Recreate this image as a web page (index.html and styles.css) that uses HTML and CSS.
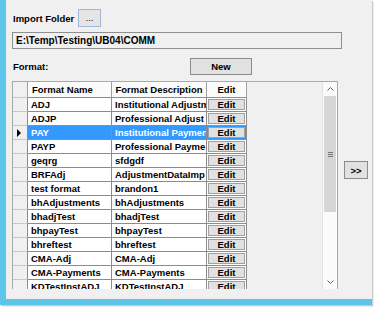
FILE: index.html
```html
<!DOCTYPE html>
<html lang="en">
<head>
    <meta charset="UTF-8">
    <meta name="viewport" content="width=device-width, initial-scale=1.0">
    <title>Import Formats</title>
    <link rel="stylesheet" href="styles.css">
</head>
<body>
    <div class="window">
        <div class="frame">
            <!-- Folder picker -->
            <div class="folder-row">
                <span class="folder-label">Import Folder</span>
                <button class="btn btn-browse">...</button>
            </div>
            <div class="path-box">E:\Temp\Testing\UB04\COMM</div>

            <div class="format-row">
                <span class="format-label">Format:</span>
                <button class="btn btn-new">New</button>
            </div>

            <!-- Formats grid -->
            <div class="grid-row">
                <div class="grid">
                    <div class="grid-body">
                        <div class="row head">
                            <div class="cell rh"></div>
                            <div class="cell h-name">Format Name</div>
                            <div class="cell h-center">Format Description</div>
                            <div class="cell h-center">Edit</div>
                        </div>
                        <div class="row"><div class="cell rh"></div><div class="cell">ADJ</div><div class="cell">Institutional Adjustm</div><div class="cell edit"><button>Edit</button></div></div>
                        <div class="row"><div class="cell rh"></div><div class="cell">ADJP</div><div class="cell">Professional Adjust</div><div class="cell edit"><button>Edit</button></div></div>
                        <div class="row selected"><div class="cell rh"><span class="arrow"></span></div><div class="cell">PAY</div><div class="cell">Institutional Paymen</div><div class="cell edit"><button>Edit</button></div></div>
                        <div class="row"><div class="cell rh"></div><div class="cell">PAYP</div><div class="cell">Professional Payme</div><div class="cell edit"><button>Edit</button></div></div>
                        <div class="row"><div class="cell rh"></div><div class="cell">geqrg</div><div class="cell">sfdgdf</div><div class="cell edit"><button>Edit</button></div></div>
                        <div class="row"><div class="cell rh"></div><div class="cell">BRFAdj</div><div class="cell">AdjustmentDataImp</div><div class="cell edit"><button>Edit</button></div></div>
                        <div class="row"><div class="cell rh"></div><div class="cell">test format</div><div class="cell">brandon1</div><div class="cell edit"><button>Edit</button></div></div>
                        <div class="row"><div class="cell rh"></div><div class="cell">bhAdjustments</div><div class="cell">bhAdjustments</div><div class="cell edit"><button>Edit</button></div></div>
                        <div class="row"><div class="cell rh"></div><div class="cell">bhadjTest</div><div class="cell">bhadjTest</div><div class="cell edit"><button>Edit</button></div></div>
                        <div class="row"><div class="cell rh"></div><div class="cell">bhpayTest</div><div class="cell">bhpayTest</div><div class="cell edit"><button>Edit</button></div></div>
                        <div class="row"><div class="cell rh"></div><div class="cell">bhreftest</div><div class="cell">bhreftest</div><div class="cell edit"><button>Edit</button></div></div>
                        <div class="row"><div class="cell rh"></div><div class="cell">CMA-Adj</div><div class="cell">CMA-Adj</div><div class="cell edit"><button>Edit</button></div></div>
                        <div class="row"><div class="cell rh"></div><div class="cell">CMA-Payments</div><div class="cell">CMA-Payments</div><div class="cell edit"><button>Edit</button></div></div>
                        <div class="row"><div class="cell rh"></div><div class="cell">KDTestInstADJ</div><div class="cell">KDTestInstADJ</div><div class="cell edit"><button>Edit</button></div></div>
                    </div>
                    <div class="vscroll">
                        <div class="sb-btn">
                            <svg width="7" height="4" viewBox="0 0 7 4"><polyline points="0.5,3.5 3.5,0.5 6.5,3.5" fill="none" stroke="#606060" stroke-width="1"/></svg>
                        </div>
                        <div class="sb-thumb">
                            <span class="grip"></span>
                        </div>
                        <div class="sb-track"></div>
                        <div class="sb-btn">
                            <svg width="7" height="4" viewBox="0 0 7 4"><polyline points="0.5,0.5 3.5,3.5 6.5,0.5" fill="none" stroke="#606060" stroke-width="1"/></svg>
                        </div>
                    </div>
                </div>
                <button class="btn btn-move">&gt;&gt;</button>
            </div>
        </div>
    </div>
</body>
</html>
```

FILE: styles.css
```css
body {
    margin: 0;
    padding: 0;
    font-family: "Liberation Sans", Arial, sans-serif;
    font-size: 9.5px;
    font-weight: bold;
    color: #000;
    background: #fff;
}

.window {
    width: 380px;
    height: 312px;
    overflow: hidden;
    background: #fff;
}

.frame {
    box-sizing: border-box;
    width: 372px;
    height: 305px;
    padding: 9px 0 0 6px;
    background: #f0f0f0;
    border-left: 6px solid #5ec5ea;
    border-bottom: 6px solid #5ec5ea;
    box-shadow: 1px 1px 0 #c9c9c9, 2px 2px 1px rgba(0, 0, 0, 0.06);
}

.btn {
    font-family: inherit;
    font-size: 9.5px;
    font-weight: bold;
    color: #000;
    background: #e1e1e1;
    border: 1px solid #adadad;
    padding: 0;
    margin: 0;
}

.folder-row {
    display: flex;
    align-items: center;
    height: 18px;
}

.folder-label {
    width: 66px;
    padding-left: 1px;
    box-sizing: border-box;
}

.btn-browse {
    width: 23px;
    height: 18px;
    background: #e5e5e5;
    border-color: #9fb9d6;
    font-weight: normal;
    line-height: 10px;
}

.path-box {
    margin-top: 5px;
    width: 330px;
    height: 17px;
    box-sizing: border-box;
    border: 1px solid #8f8f8f;
    padding-left: 3px;
    font-size: 10px;
    line-height: 15px;
    background: #f0f0f0;
}

.format-row {
    display: flex;
    align-items: center;
    margin-top: 9px;
    height: 17px;
}

.format-label {
    width: 178px;
    padding-left: 1px;
    box-sizing: border-box;
}

.btn-new {
    width: 62px;
    height: 17px;
    border-color: #8c8c8c;
}

.grid-row {
    display: flex;
    margin-top: 6px;
}

.grid {
    display: flex;
    width: 326px;
    height: 208px;
    box-sizing: border-box;
    border: 1px solid #a9a9a9;
    border-bottom: none;
    overflow: hidden;
}

.grid-body {
    flex: 1;
    overflow: hidden;
}

/* rows: row header, name, description, edit */
.row {
    display: grid;
    grid-template-columns: 15px 84px 95px 40px;
    height: 14px;
}

.row.head {
    height: 16px;
}

.cell {
    box-sizing: border-box;
    border-right: 1px solid #8c8c8c;
    border-bottom: 1px solid #8c8c8c;
    background: #fff;
    padding-left: 3px;
    line-height: 13px;
    white-space: nowrap;
    overflow: hidden;
}

.head .cell {
    background: #fbfbfb;
    line-height: 15px;
    border-right-color: #a0a0a0;
}

.head .cell.rh {
    background: #f0f0f0;
}

.head .h-name {
    padding-left: 4px;
}

.head .h-center {
    padding-left: 0;
    text-align: center;
}

.cell.rh {
    position: relative;
    padding: 0;
    background: #f0f0f0;
    border-bottom-color: #c8c8c8;
}

.cell.edit {
    padding: 1px;
}

.cell.edit button {
    display: block;
    box-sizing: border-box;
    width: 100%;
    height: 11px;
    margin: 0;
    padding: 0;
    font-family: inherit;
    font-size: 9.5px;
    font-weight: bold;
    line-height: 9px;
    color: #000;
    background: #e1e1e1;
    border: 1px solid #a0a0a0;
}

.row.selected .cell {
    background: #3399ff;
    color: #fff;
}

.row.selected .cell.rh {
    background: #f0f0f0;
}

.arrow {
    position: absolute;
    left: 4px;
    top: 3px;
    width: 0;
    height: 0;
    border-left: 4px solid #000;
    border-top: 4px solid transparent;
    border-bottom: 4px solid transparent;
}

.vscroll {
    width: 14px;
    display: flex;
    flex-direction: column;
    background: #fafafa;
    border-left: 1px solid #e2e2e2;
}

.sb-btn {
    height: 14px;
    display: flex;
    align-items: center;
    justify-content: center;
    background: #fafafa;
}

.sb-thumb {
    height: 116px;
    margin: 0 1px;
    background: #d6d6d6;
    display: flex;
    align-items: center;
    justify-content: center;
}

.grip {
    width: 5px;
    height: 5px;
    background: linear-gradient(#777 0 1px, transparent 1px 2px, #777 2px 3px, transparent 3px 4px, #777 4px 5px);
}

.sb-track {
    flex: 1;
}

.btn-move {
    margin: 80px 0 0 6px;
    width: 24px;
    height: 18px;
    font-size: 9.5px;
    border-color: #8c8c8c;
    align-self: flex-start;
}
```
